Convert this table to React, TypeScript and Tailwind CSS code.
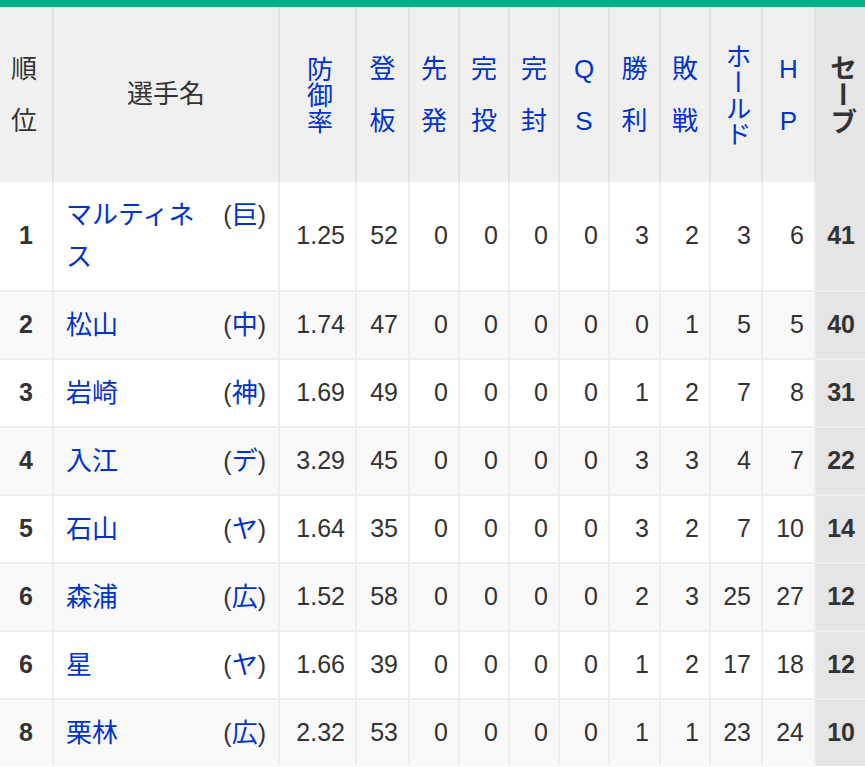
import React from "react";

type Row = {
  rank: number;
  name: string;
  team: string;
  era: string;
  stats: number[];
  save: number;
};

const rows: Row[] = [
  { rank: 1, name: "マルティネス", team: "巨", era: "1.25", stats: [52, 0, 0, 0, 0, 3, 2, 3, 6], save: 41 },
  { rank: 2, name: "松山", team: "中", era: "1.74", stats: [47, 0, 0, 0, 0, 0, 1, 5, 5], save: 40 },
  { rank: 3, name: "岩崎", team: "神", era: "1.69", stats: [49, 0, 0, 0, 0, 1, 2, 7, 8], save: 31 },
  { rank: 4, name: "入江", team: "デ", era: "3.29", stats: [45, 0, 0, 0, 0, 3, 3, 4, 7], save: 22 },
  { rank: 5, name: "石山", team: "ヤ", era: "1.64", stats: [35, 0, 0, 0, 0, 3, 2, 7, 10], save: 14 },
  { rank: 6, name: "森浦", team: "広", era: "1.52", stats: [58, 0, 0, 0, 0, 2, 3, 25, 27], save: 12 },
  { rank: 6, name: "星", team: "ヤ", era: "1.66", stats: [39, 0, 0, 0, 0, 1, 2, 17, 18], save: 12 },
  { rank: 8, name: "栗林", team: "広", era: "2.32", stats: [53, 0, 0, 0, 0, 1, 1, 23, 24], save: 10 },
];

// two-char headers are spread out, the longer ones are plain vertical text
const pairHeads = ["登板", "先発", "完投", "完封", "QS", "勝利", "敗戦"];

const cols =
  "grid grid-cols-[52px_224px_75px_51px_48px_48px_48px_48px_49px_48px_50px_51px_49px] gap-x-[2px]";

function Pair({ text, blue = true }: { text: string; blue?: boolean }) {
  return (
    <div className={`flex flex-col items-center gap-[26px] ${blue ? "text-[#0033cc]" : "text-[#333]"}`}>
      {text.split("").map((c, i) => (
        <span key={i} className="block text-[26px] leading-[26px]">
          {c}
        </span>
      ))}
    </div>
  );
}

function Vertical({ text }: { text: string }) {
  return (
    <span className="[writing-mode:vertical-rl] text-[26px] leading-[26px] text-[#0033cc]">{text}</span>
  );
}

export default function App() {
  return (
    <div
      className="w-[865px] overflow-hidden bg-white text-[25px] text-[#333]"
      style={{ fontFamily: '"Liberation Sans", "Noto Sans CJK JP", sans-serif' }}
    >
      <div className="h-[7px] bg-[#00af85]" />

      {/* header */}
      <div className={`${cols} bg-[#e2e2e2]`}>
        <div className="flex h-[175px] items-center justify-center bg-[#f0f0f0] pr-[4px]">
          <Pair text="順位" blue={false} />
        </div>
        <div className="flex items-center justify-center bg-[#f0f0f0] text-[26px]">選手名</div>
        <div className="flex items-center justify-center bg-[#f0f0f0]">
          <Vertical text="防御率" />
        </div>
        {pairHeads.map((h) => (
          <div key={h} className="flex items-center justify-center bg-[#f0f0f0]">
            <Pair text={h} />
          </div>
        ))}
        <div className="flex items-center justify-center bg-[#f0f0f0]">
          <Vertical text="ホールド" />
        </div>
        <div className="flex items-center justify-center bg-[#f0f0f0]">
          <Pair text="HP" />
        </div>
        <div className="flex items-center justify-center bg-[#e5e5e5]">
          <span className="[writing-mode:vertical-rl] text-[27px] font-bold leading-[27px] text-[#333]">
            セーブ
          </span>
        </div>
      </div>

      {/* body */}
      <div className={`${cols} gap-y-[2px] bg-[#efefef]`}>
        {rows.map((r, idx) => {
          const bg = idx % 2 === 0 ? "bg-white" : "bg-[#f9f9f9]";
          return (
            <React.Fragment key={idx}>
              <div className={`${bg} flex items-center justify-center font-bold`}>{r.rank}</div>
              <div className={`${bg} flex gap-3 px-3 py-[12px] leading-[42px]`}>
                <a href="#" className="min-w-0 flex-1 text-[26px] text-[#0033cc]">
                  {r.name}
                </a>
                <span className="shrink-0">
                  (<a href="#" className="text-[26px] text-[#0033cc]">{r.team}</a>)
                </span>
              </div>
              <div className={`${bg} flex items-center justify-end pr-[10px]`}>{r.era}</div>
              {r.stats.map((s, i) => (
                <div key={i} className={`${bg} flex items-center justify-end pr-[10px]`}>
                  {s}
                </div>
              ))}
              <div className="flex items-center justify-end bg-[#e5e5e5] pr-[10px] font-bold">{r.save}</div>
            </React.Fragment>
          );
        })}
      </div>
    </div>
  );
}
